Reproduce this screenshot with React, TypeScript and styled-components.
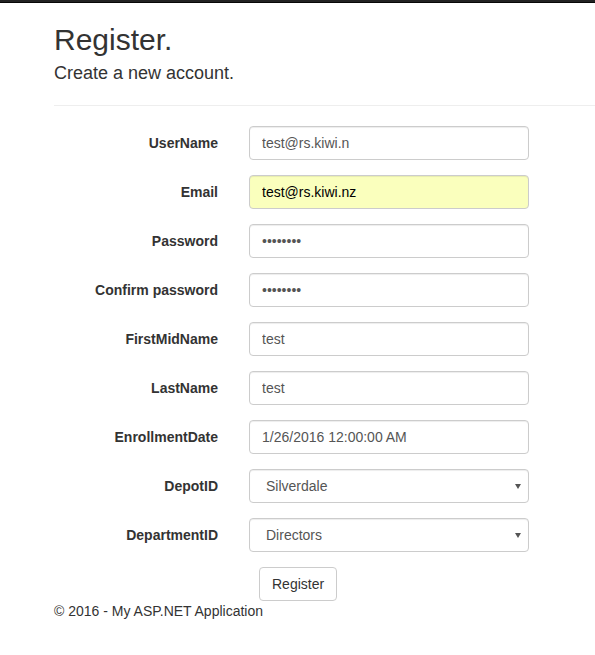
import React from "react";
import styled, { createGlobalStyle } from "styled-components";

const GlobalStyle = createGlobalStyle`
  html, body {
    margin: 0;
    padding: 0;
    background: #fff;
  }
  body {
    font-family: "Liberation Sans", Helvetica, Arial, sans-serif;
    font-size: 14px;
    line-height: 1.42857;
    color: #333;
  }
  * {
    box-sizing: border-box;
  }
`;

const TopBar = styled.div`
  height: 3px;
  background: #222;
  border-bottom: 1px solid #080808;
`;

const BodyContent = styled.div`
  padding-left: 54px;
`;

const Title = styled.h2`
  font-size: 30px;
  font-weight: 500;
  line-height: 1.1;
  margin: 20px 0 8px;
`;

const Subtitle = styled.h4`
  font-size: 18px;
  font-weight: 500;
  line-height: 1.1;
  margin: 0 0 21px;
`;

const Rule = styled.hr`
  border: 0;
  border-top: 1px solid #eee;
  margin: 0 0 20px;
`;

const FormGroup = styled.div`
  display: grid;
  grid-template-columns: 164px 280px;
  column-gap: 31px;
  margin-bottom: 15px;
`;

const Label = styled.label`
  text-align: right;
  font-weight: bold;
  padding-top: 7px;
  line-height: 20px;
`;

const Input = styled.input<{ $autofill?: boolean }>`
  display: block;
  width: 280px;
  height: 34px;
  padding: 6px 12px;
  font-family: inherit;
  font-size: 14px;
  line-height: 20px;
  color: ${(p) => (p.$autofill ? "#000" : "#555")};
  background: ${(p) => (p.$autofill ? "#faffbd" : "#fff")};
  border: 1px solid #ccc;
  border-radius: 4px;
  box-shadow: inset 0 1px 1px rgba(0, 0, 0, 0.075);
  outline: none;
`;

const SelectWrap = styled.div`
  position: relative;
  width: 280px;
`;

const Select = styled.select`
  display: block;
  width: 280px;
  height: 34px;
  padding: 6px 12px 6px 16px;
  font-family: inherit;
  font-size: 14px;
  color: #555;
  background: #fff;
  border: 1px solid #ccc;
  border-radius: 4px;
  box-shadow: inset 0 1px 1px rgba(0, 0, 0, 0.075);
  appearance: none;
  -webkit-appearance: none;
  outline: none;
`;

const Caret = styled.svg`
  position: absolute;
  right: 8px;
  top: 15px;
  pointer-events: none;
`;

const Button = styled.button`
  grid-column: 2;
  justify-self: start;
  margin-left: 10px;
  height: 34px;
  padding: 6px 12px;
  font-family: inherit;
  font-size: 14px;
  line-height: 20px;
  color: #333;
  background: #fff;
  border: 1px solid #ccc;
  border-radius: 4px;
  cursor: pointer;
`;

const ButtonRow = styled.div`
  display: grid;
  grid-template-columns: 164px 280px;
  column-gap: 31px;
`;

const Footer = styled.footer`
  margin: 0;
  line-height: 20px;
`;

type Field = {
  label: string;
  value: string;
  type?: string;
  autofill?: boolean;
  options?: string[];
};

const fields: Field[] = [
  { label: "UserName", value: "test@rs.kiwi.n" },
  { label: "Email", value: "test@rs.kiwi.nz", autofill: true },
  { label: "Password", value: "password", type: "password" },
  { label: "Confirm password", value: "password", type: "password" },
  { label: "FirstMidName", value: "test" },
  { label: "LastName", value: "test" },
  { label: "EnrollmentDate", value: "1/26/2016 12:00:00 AM" },
  { label: "DepotID", value: "Silverdale", options: ["Silverdale"] },
  { label: "DepartmentID", value: "Directors", options: ["Directors"] },
];

export default function App() {
  return (
    <>
      <GlobalStyle />
      <TopBar />
      <BodyContent>
        <Title>Register.</Title>
        <Subtitle>Create a new account.</Subtitle>
        <Rule />
        <form onSubmit={(e) => e.preventDefault()}>
          {fields.map((f) => (
            <FormGroup key={f.label}>
              <Label>{f.label}</Label>
              {f.options ? (
                <SelectWrap>
                  <Select defaultValue={f.value}>
                    {f.options.map((o) => (
                      <option key={o}>{o}</option>
                    ))}
                  </Select>
                  <Caret width="6" height="5" viewBox="0 0 6 5">
                    <path d="M0 0H6L3 5Z" fill="#555" />
                  </Caret>
                </SelectWrap>
              ) : (
                <Input
                  type={f.type ?? "text"}
                  defaultValue={f.value}
                  $autofill={f.autofill}
                />
              )}
            </FormGroup>
          ))}
          <ButtonRow>
            <Button type="submit">Register</Button>
          </ButtonRow>
        </form>
        <Footer>© 2016 - My ASP.NET Application</Footer>
      </BodyContent>
    </>
  );
}
